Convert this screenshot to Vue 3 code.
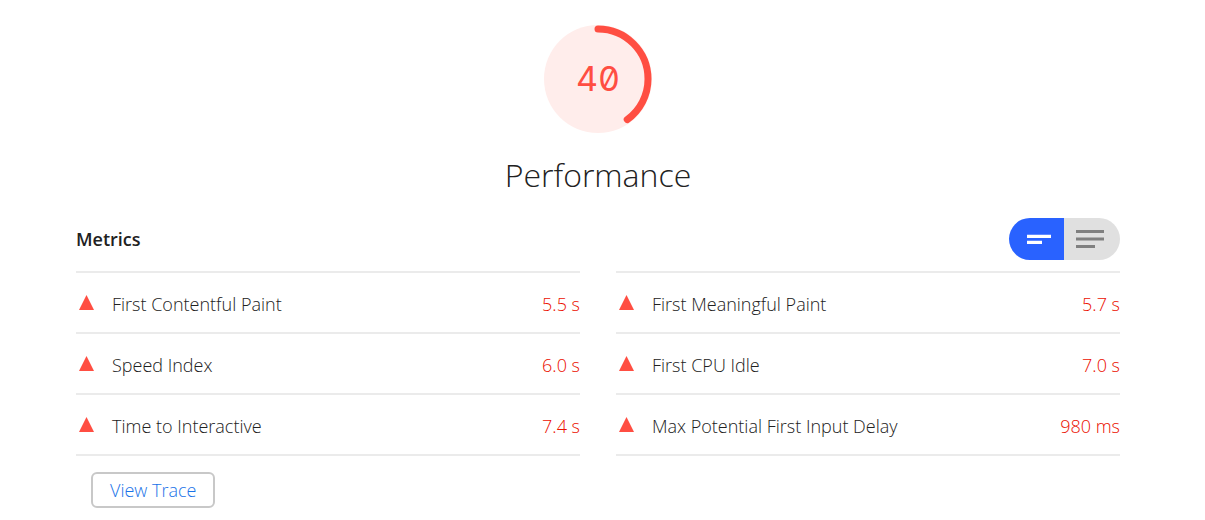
<script setup>
import { ref } from 'vue'

const score = 40
const radius = 50
const circumference = 2 * Math.PI * radius
const view = ref('compact')

const columns = [
  [
    { name: 'First Contentful Paint', value: '5.5 s' },
    { name: 'Speed Index', value: '6.0 s' },
    { name: 'Time to Interactive', value: '7.4 s' },
  ],
  [
    { name: 'First Meaningful Paint', value: '5.7 s' },
    { name: 'First CPU Idle', value: '7.0 s' },
    { name: 'Max Potential First Input Delay', value: '980 ms' },
  ],
]
</script>

<template>
  <main class="report">
    <section class="summary">
      <div class="gauge">
        <svg class="dial" viewBox="0 0 108 108" aria-hidden="true">
          <circle class="disc" cx="54" cy="54" r="54" />
          <circle
            class="arc"
            cx="54"
            cy="54"
            :r="radius"
            :stroke-dasharray="`${(circumference * score) / 100} ${circumference}`"
            transform="rotate(-90 54 54)"
          />
        </svg>
        <span class="score">{{ score }}</span>
      </div>
      <h1 class="title">Performance</h1>
    </section>

    <header class="bar">
      <h2 class="heading">Metrics</h2>
      <div class="toggle" role="group" aria-label="Metrics view">
        <button
          type="button"
          class="half first"
          :class="{ active: view === 'compact' }"
          :aria-pressed="view === 'compact'"
          aria-label="Compact view"
          @click="view = 'compact'"
        >
          <svg class="lines" viewBox="0 0 28 20" aria-hidden="true">
            <path d="M4 5.700h24v3.300H4zM4 11.700h15v3.300H4z" />
          </svg>
        </button>
        <button
          type="button"
          class="half last"
          :class="{ active: view === 'expanded' }"
          :aria-pressed="view === 'expanded'"
          aria-label="Expanded view"
          @click="view = 'expanded'"
        >
          <svg class="lines" viewBox="0 0 28 20" aria-hidden="true">
            <path d="M0 1h28v3H0zM0 8.500h28v3H0zM0 16h19v3H0z" />
          </svg>
        </button>
      </div>
    </header>

    <div class="columns">
      <ul v-for="(column, i) in columns" :key="i" class="column">
        <li v-for="metric in column" :key="metric.name" class="metric">
          <svg class="marker" viewBox="0 0 15 15" aria-hidden="true">
            <path d="M7.500 0L15 15H0z" />
          </svg>
          <span class="name">{{ metric.name }}</span>
          <span class="value">{{ metric.value }}</span>
        </li>
      </ul>
    </div>

    <button type="button" class="trace">View Trace</button>
  </main>
</template>

<style>
body {
  margin: 0;
  background: #fff;
}
</style>

<style scoped>
.report {
  padding: 25px 85px 12px 76px;
  font-family: "Open Sans", "Noto Sans", sans-serif;
  font-size: 18px;
  font-weight: 350;
  line-height: 24px;
  color: #212121;
}
.summary {
  display: flex;
  flex-direction: column;
  align-items: center;
}
.gauge {
  display: grid;
  place-items: center;
  width: 108px;
  height: 108px;
}
.dial,
.score {
  grid-area: 1 / 1;
}
.dial {
  width: 100%;
}
.disc {
  fill: #ffedeb;
}
.arc {
  fill: none;
  stroke: #ff4e42;
  stroke-width: 7;
  stroke-linecap: round;
}
.score {
  font-family: Inter, sans-serif;
  font-size: 34px;
  font-weight: 400;
  line-height: 40px;
  font-feature-settings: "zero", "tnum";
  color: #ff4e42;
}
.title {
  margin: 18px 0 0;
  font-size: 32px;
  font-weight: 350;
  line-height: 48px;
}
.bar {
  display: flex;
  align-items: center;
  justify-content: space-between;
  margin: 19px 0 11px;
}
.heading {
  margin: 0;
  font-size: 18px;
  font-weight: 600;
}
.toggle {
  display: flex;
}
.half {
  display: flex;
  align-items: center;
  justify-content: center;
  width: 56px;
  height: 42px;
  padding: 0;
  border: 0;
  background: #e0e0e0;
  cursor: pointer;
}
.first {
  width: 55px;
  border-radius: 21px 0 0 21px;
}
.last {
  border-radius: 0 21px 21px 0;
  padding-right: 4px;
}
.lines {
  width: 28px;
  height: 20px;
  fill: #808080;
}
.active {
  background: #2962ff;
}
.active .lines {
  fill: #fff;
}
.columns {
  display: grid;
  grid-template-columns: 1fr 1fr;
  gap: 36px;
}
.column {
  margin: 0;
  padding: 0;
  list-style: none;
  border-top: 2px solid #ebebeb;
}
.metric {
  display: flex;
  align-items: center;
  padding: 19px 0 16px;
  border-bottom: 2px solid #ebebeb;
}
.marker {
  width: 15px;
  height: 15px;
  margin: 0 18px 3px 3px;
  fill: #ff4e42;
}
.name {
  flex: 1;
}
.value {
  color: #eb0f00;
}
.trace {
  margin: 16px 0 0 15px;
  padding: 4px 17px;
  border: 2px solid #c8c8c8;
  border-radius: 6px;
  background: #fff;
  font: inherit;
  color: #1a73e8;
  cursor: pointer;
}
</style>
